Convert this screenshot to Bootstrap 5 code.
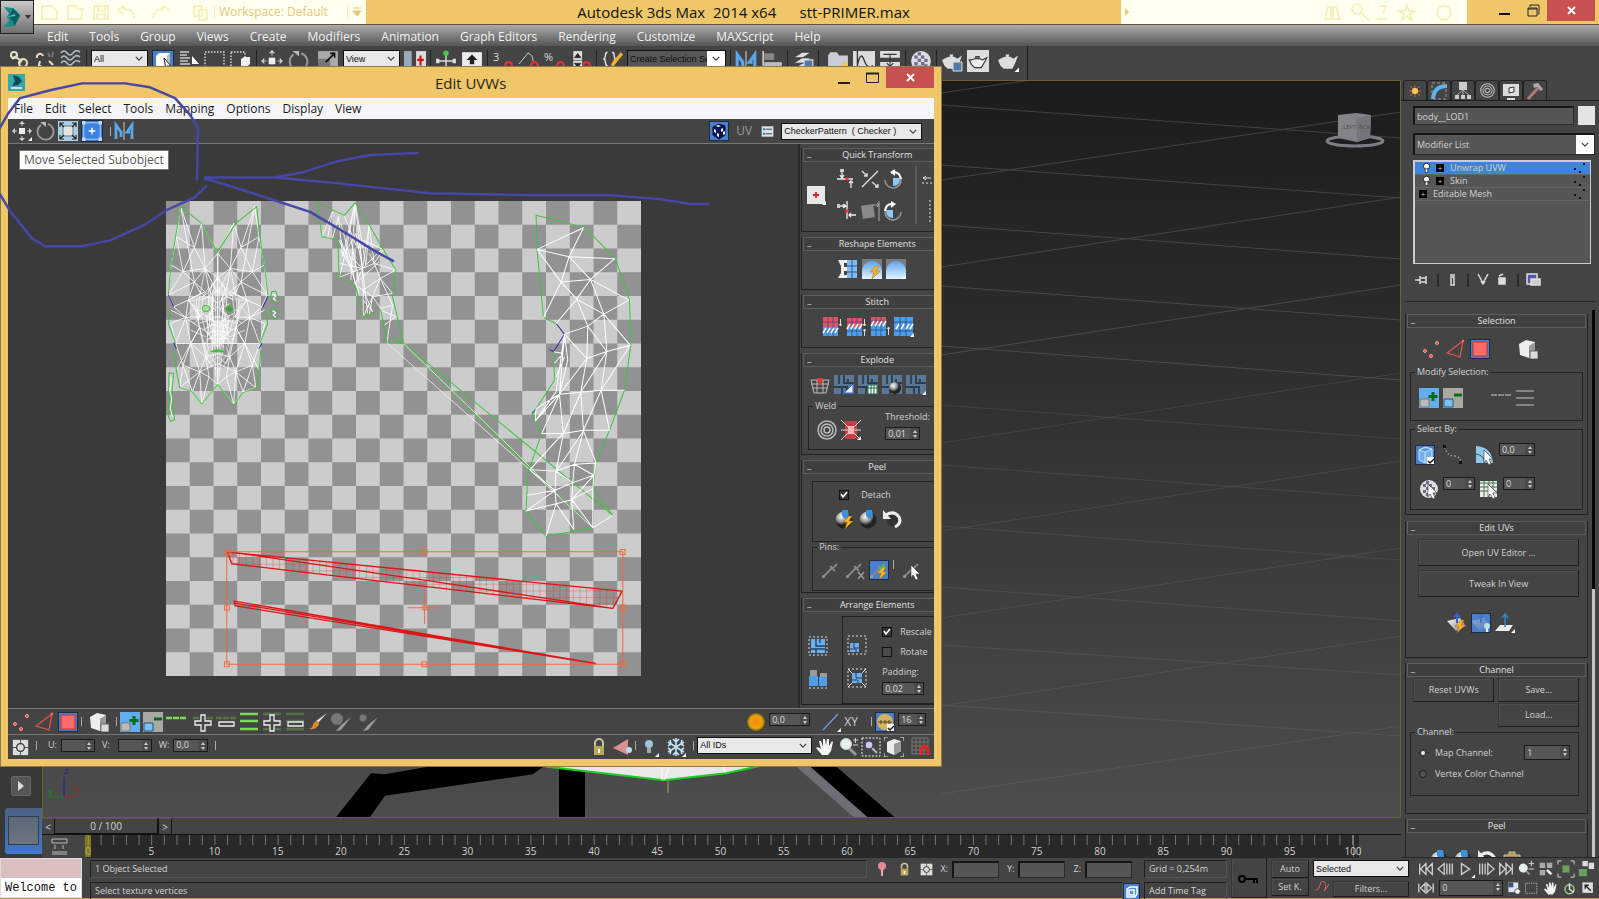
<!DOCTYPE html>
<html lang="en">
<head>
<meta charset="utf-8">
<meta name="viewport" content="width=device-width, initial-scale=1">
<title>Autodesk 3ds Max 2014 x64 - stt-PRIMER.max</title>
<link rel="stylesheet" href="https://cdn.jsdelivr.net/npm/bootstrap@5.3.0/dist/css/bootstrap.min.css">
<style>
:root{--gold:#efc768;--bg:#444;--line:#222;--field:#565656;--txt:#d2d2d2;--blue:#4a7fcb}
body{font:9px/12px "Open Sans",sans-serif;color:var(--txt);background:var(--bg);overflow:hidden}
button,input,select{font:inherit;color:inherit;border-radius:0}
button{background:none;border:0;padding:0;display:inline-flex;align-items:center;justify-content:center}
a{color:inherit;text-decoration:none}
svg{display:block;flex:none}
.ic{width:20px;height:20px}
.app{height:100vh}
.titlebar{height:25px;background:var(--gold);color:#111;border-bottom:1px solid #5d5340}
.appbtn{width:34px;height:34px;background:linear-gradient(#c9c9c9,#6f6f6f);border:1px solid #222;z-index:2;align-self:flex-start;flex:none}
.quick{background:#fffff0;height:24px;width:332px;color:#e6c877;font-size:12px}
.quick .wsp{border-left:1px solid #f6f0c0;border-right:1px solid #f6f0c0;width:134px}
.apptitle{font-size:15px;white-space:pre}
.search{background:#fffff0;height:24px;width:346px}
.winbtn{width:28px;height:21px}
.close{width:48px;height:21px;background:#c75050;color:#fff;align-self:flex-start}
.mainmenu{height:21px;background:linear-gradient(#aaa,#555);font-size:12px;color:#f2f2f2;padding:2px 0 0 36px}
.mainmenu a{padding:0 10px 0 11px}
.maintools{height:34px;padding:4px 0 0 8px;width:1028px;border-right:1px solid #1a1a1a;white-space:nowrap}
.maintools .ic{width:22px;height:22px}
.bar{width:1px;height:16px;background:#222;flex:none}
.lbar{width:1px;height:9px;background:#aaa;flex:none}
.drop{appearance:none;background:#e8e8e8 url("data:image/svg+xml,%3Csvg xmlns='http://www.w3.org/2000/svg' viewBox='0 0 10 6'%3E%3Cpath d='M1 1l4 4 4-4' fill='none' stroke='%23444' stroke-width='1.6'/%3E%3C/svg%3E") no-repeat right 4px center/8px 5px;color:#111;border:1px solid #111;font:9px/12px "Liberation Sans",sans-serif;height:17px;padding:0 14px 0 2px}
.boxed{background:url("data:image/svg+xml,%3Csvg xmlns='http://www.w3.org/2000/svg' viewBox='0 0 10 6'%3E%3Cpath d='M1 1l4 4 4-4' fill='none' stroke='%23444' stroke-width='1.6'/%3E%3C/svg%3E") no-repeat right 5px center/8px 5px,linear-gradient(#fff,#fff) no-repeat right/18px 100%,#565656;padding-right:18px}
.w57{width:57px}
.w99{width:99px}
.modlist{height:22px;color:var(--txt);font-family:inherit;margin-bottom:5px}
.on{background:var(--blue);outline:1px solid #1d2c44;outline-offset:-1px}
.strip{width:42px;background:#383838}
.playb{width:20px;height:20px;background:#555;border:1px solid #666;border-radius:2px}
.layoutb{width:37px;height:46px;border-radius:3px 0 0 3px;background:linear-gradient(#4c6180,#3f78cc);padding:8px 3px}
.layoutb i{width:31px;height:29px;background:linear-gradient(#5b6878,#6d747d);border:1px solid #333c4c}
.view{background:linear-gradient(#1b1b1b,#4d4d4d);border:1px solid #6e5f2c}
.slider{height:16px;font-size:10px}
.slider button{width:13px;border-right:1px solid #111;border-top:1px solid #555}
.slider .thumb{width:104px;border-right:2px solid #111;border-bottom:1px solid #111}
.ruler{height:24px;border-top:1px solid #111}
.rulerdark{background:#292929;padding-left:3px;padding-right:5px;margin-right:42px}
.ticks{height:22px;background:linear-gradient(90deg,#777 1px,transparent 1px) 0 0/1% 10px repeat-x;border-right:1px solid #777;padding-top:10px;font-size:10px;line-height:12px}
.ticks span{width:0;display:flex;justify-content:center;position:relative}
.ticks span:first-child::before{content:"";position:absolute;left:-3px;top:-10px;width:6px;height:22px;background:#a39b20;opacity:.7}
.cmd{width:198px}
.tabs{height:21px;border-bottom:1px solid #1b1b1b;padding-left:2px}
.tabs button{width:24px;border:1px solid #222;border-bottom:0;border-radius:3px 3px 0 0}
.cmdtop{padding-top:5px}
.field{border:1px solid #2b2b2b;border-top:2px solid #151515;border-left:2px solid #151515;min-width:0}
input.field{background:var(--field);color:var(--txt);padding:0 0 0 2px}
.coord{width:47px;height:17px}
.stack{height:104px;background:#565656;border:1px solid #ccc;border-width:2px 1px 1px 2px}
.stack li{height:13px;border-bottom:1px solid #666;gap:6px}
.stack li.sel{background:#3f83dc}
.plus{width:8px;height:8px;background:#000;color:#ccc;font-size:8px;line-height:7px;text-align:center}
.roll{border:1px solid var(--line);border-top:0}
.roll>h2{font-size:9px;line-height:12px;height:14px;font-weight:400;text-align:center;border:1px solid #5e5e5e;background:#404040;margin:0 1px;color:#e0e0e0;position:relative}
.roll>h2::before{content:"_";position:absolute;left:3px;line-height:8px}
fieldset{border:1px solid var(--line);min-width:0}
legend{float:none;width:auto;font-size:9px;line-height:10px;margin:0 0 0 4px;padding:0 2px}
.selrow{padding-top:9px}
.selrow2{padding-top:12px}
.selrow>:not(.spin),.selrow2>:not(.spin){margin-top:2px}
.mbtn{border:1px solid #383838;border-right-color:#1c1c1c;border-bottom-color:#1c1c1c;box-shadow:inset 1px 1px #4d4d4d}
.spin{height:13px;border:1px solid #1b1b1b;background:#4b4b4b;display:inline-flex;flex:none}
.spin input{background:var(--field);border:0;padding:0 0 0 2px;min-width:0;flex:1 1 0;line-height:10px;color:#ddd}
.spin i{width:9px;flex:none}
.spin i::before,.spin i::after{content:"";display:block;margin:2px auto 0;width:0;border:2px solid transparent}
.spin i::before{border-bottom:3px solid #ccc;border-top:0}
.spin i::after{border-top:3px solid #ccc;border-bottom:0}
.rail{width:4px;background:linear-gradient(#050505 51%,#c4c4c4 51%)}
.tick{appearance:none;width:10px;height:10px;border:1px solid #111;background:#4c4c4c;margin:0;flex:none}
.tick:checked{background:#333 url("data:image/svg+xml,%3Csvg xmlns='http://www.w3.org/2000/svg' viewBox='0 0 8 8'%3E%3Cpath d='M1 3l2 3 4-5' fill='none' stroke='%23fff' stroke-width='1.6'/%3E%3C/svg%3E") center/8px}
.dot{appearance:none;width:8px;height:8px;border:1px solid #1a1a1a;border-radius:50%;background:#555;margin:0}
.dot:checked{background:#eee;box-shadow:inset 0 0 0 1px #333}
.status{height:41px;border-bottom:1px solid #b99a4a}
.status>*{padding-top:2px}
.sline{border:1px solid #1f1f1f;border-right-color:#555;border-bottom-color:#555;height:18px;padding:2px 4px}
.listener{width:82px;border:1px solid #ddd}
.listener input{border:0;height:19px;font:12px/14px "Liberation Mono",monospace;color:#111;padding:0 0 0 4px}
.listener .rec{background:#d9bfc0}
.pb{width:178px}
.pb .ic{width:18px;height:18px}
/* floating UV editor */
.uvwin{position:absolute;left:1px;top:67px;width:58.8%;height:calc(100vh - 200px);background:var(--gold);padding:0 7px 7px;box-shadow:0 0 0 1px #8f7b48}
.uvtitle{height:31px;color:#2b2418;font-size:15px}
.uvtitle span{padding-left:86px}
.uvmenu{height:21px;background:#f5f5f7;color:#1a1a1a;font-size:12px;gap:12px;padding-left:6px}
.uvtool{height:25px;background:var(--bg);border-bottom:1px solid #777;gap:3px}
.uvarea{background:#3a3a3a;padding:25px 0 0 1px}
.checker{width:calc(60% + 2px);aspect-ratio:1;flex:none;background:conic-gradient(#ccc 25%,#929292 0 50%,#ccc 0 75%,#929292 0) 0 0/10% 10%}
.side{width:136px;background:var(--bg);border-left:2px solid #2b2b2b;overflow:hidden;padding:4px 0 0 1px}
.side>*{width:152px;margin-bottom:5px}
.foot{background:var(--bg);border-top:1px solid #777;height:26px;gap:3px}
.foot:last-child{height:25px}
.tip{position:absolute;left:19px;top:150px;height:20px;background:#fff;border:1px solid #767676;color:#575757;font-size:12px;line-height:18px;padding:0 4px}
.ink{position:absolute;left:0;top:0;pointer-events:none}
</style>
</head>
<body>
<svg width="0" height="0" class="position-absolute" aria-hidden="true">
<defs>
<linearGradient id="gs" x1="0" y1="0" x2="1" y2="1"><stop offset="0" stop-color="#fff"/><stop offset="1" stop-color="#777"/></linearGradient>
<linearGradient id="gb" x1="0" y1="0" x2="0" y2="1"><stop offset="0" stop-color="#5aa5ea"/><stop offset="1" stop-color="#e6f4ff"/></linearGradient>
<radialGradient id="gball" cx=".35" cy=".3"><stop offset="0" stop-color="#fff"/><stop offset=".6" stop-color="#999"/><stop offset="1" stop-color="#222"/></radialGradient>
<radialGradient id="gsun"><stop offset="0" stop-color="#f08a00"/><stop offset=".7" stop-color="#f3a010"/><stop offset="1" stop-color="#6d6a10"/></radialGradient>
<pattern id="redgrid" width="20" height="20" patternUnits="userSpaceOnUse"><path d="M0 0H20M0 0V20" stroke="#e22" stroke-width="3" fill="none"/></pattern>
<symbol id="cnr" viewBox="0 0 20 20"><path d="M20 16v4h-4z" fill="#fff"/></symbol>
<symbol id="link" viewBox="0 0 22 22"><g fill="none" stroke="#e8dfc2" stroke-width="2"><circle cx="6" cy="5" r="3"/><circle cx="15" cy="13" r="4"/><path d="M8 7l5 4M4 9l4-3M11 14l3-4"/></g></symbol>
<symbol id="unlink" viewBox="0 0 22 22"><g fill="none" stroke="#e8dfc2" stroke-width="2"><path d="M3 8a3 3 0 1 1 6-2M6 11l-1 4 4 3M15 11l4 4M14 17l4 2"/><path d="M14 3l2 4M19 2l-1 5" stroke="#777"/></g></symbol>
<symbol id="waves" viewBox="0 0 22 22"><path d="M1 3q3-4 6 0t6 0 7-1M1 8q3-4 6 0t6 0 7-1M1 13q3-4 6 0t6 0 7-1" fill="none" stroke="#aebcbf" stroke-width="1.6"/></symbol>
<symbol id="selobj" viewBox="0 0 22 22"><path d="M4 6l3-3h11v10l-3 3H4z" fill="#fff"/><path d="M15 6l3-3v10l-3 3z" fill="#bbb"/><path d="M12 8l7 8h-4l-1 4z" fill="#fff" stroke="#222"/></symbol>
<symbol id="sellist" viewBox="0 0 22 22"><path d="M2 2h9M2 5h7M2 8h10M2 11h8M2 14h10" stroke="#ccc" stroke-width="1.5"/><path d="M14 6l7 8h-7z" fill="#fff"/></symbol>
<symbol id="rectsel" viewBox="0 0 22 22"><path d="M1 2h19v17H1z" fill="none" stroke="#ddd" stroke-dasharray="1.5 1.5" stroke-width="1.4"/></symbol>
<symbol id="winsel" viewBox="0 0 22 22"><path d="M1 2h14v17H1z" fill="none" stroke="#ddd" stroke-dasharray="1.5 1.5" stroke-width="1.4"/><path d="M11 9l3-2h6v7l-2 2h-7z" fill="#eee"/></symbol>
<symbol id="move" viewBox="0 0 20 20"><path d="M10 0l3 3H7zM10 20l3-3H7zM0 10l3-3v6zM20 10l-3-3v6z" fill="#ccc"/><path d="M10 3v14M3 10h14" stroke="#ccc" stroke-dasharray="2 2"/><path d="M7 7h6v6H7z" fill="#eee"/></symbol>
<symbol id="rot" viewBox="0 0 20 20"><path d="M6 4a8 8 0 1 0 7-1" fill="none" stroke="#9a9a9a" stroke-width="1.8"/><path d="M5 1h6v5z" fill="#bbb"/></symbol>
<symbol id="scale" viewBox="0 0 20 20"><path d="M1 1h18v18H1z" fill="#aaa"/><path d="M1 8h11v11H1z" fill="#777"/><path d="M8 11l8-8M12 3h4v4" stroke="#111" fill="none" stroke-width="1.5"/></symbol>
<symbol id="uvscale" viewBox="0 0 20 20"><path d="M0 0h20v20H0z" fill="#a8cfe6"/><path d="M5 5h10v10H5z" fill="#e4e4e4" stroke="#777"/><path d="M2 6V2h4M14 2h4v4M18 14v4h-4M6 18H2v-4M2 2l4 4M18 2l-4 4M18 18l-4-4M2 18l4-4" stroke="#222" fill="none" stroke-width="1.2"/></symbol>
<symbol id="uvfree" viewBox="0 0 20 20"><path d="M2.500 2.500h15v15h-15z" fill="#3c83e0" stroke="#9cc6f5"/><path d="M10 7v6M7 10h6" stroke="#fff" stroke-width="1.300"/><path d="M1 1h3v3H1zM16 1h3v3h-3zM1 16h3v3H1zM16 16h3v3h-3z" fill="#bfe0ff"/></symbol>
<symbol id="mirror" viewBox="0 0 20 20"><path d="M2 18V4l5 7v5M18 18V4l-5 7h3" fill="none" stroke="#5aa8e8" stroke-width="2.800"/><path d="M10 1v18" stroke="#ccc"/></symbol>
<symbol id="pivot" viewBox="0 0 20 20"><path d="M0 1h7v18H0z" fill="#9ab"/><path d="M11 1h9v18h-9z" fill="#ddd"/><path d="M15 5v9M12 9h6" stroke="#c11" stroke-width="2"/></symbol>
<symbol id="manip" viewBox="0 0 20 20"><path d="M10 3v14M3 10h14" stroke="#ddd" stroke-width="1.300"/><circle cx="10" cy="3" r="2.500" fill="#4c4"/><path d="M1 8h3v4H1zM16 8h3v4h-3zM8 15h4v4H8z" fill="#ddd"/></symbol>
<symbol id="keyov" viewBox="0 0 20 20"><path d="M1 2h18v16H1z" fill="#eee"/><path d="M10 4l5 5h-3v4H8V9H5z" fill="#222"/></symbol>
<symbol id="magn" viewBox="0 0 20 20"><path d="M12 19v-5a3 3 0 0 1 6 0v5" fill="none" stroke="#d33" stroke-width="2.200"/></symbol>
<symbol id="updn" viewBox="0 0 20 20"><path d="M3 1h8v18H3z" fill="#ddd"/><path d="M7 3l3 4H4zM7 16l3-4H4zM3 9.500h8" fill="#222" stroke="#222" stroke-width=".5"/></symbol>
<symbol id="align" viewBox="0 0 20 20"><path d="M2 1v18" stroke="#ccc" stroke-width="1.500"/><path d="M3 3h9v6H3z" fill="#888"/><path d="M3 11h16v6H3z" fill="#bbb"/></symbol>
<symbol id="layers" viewBox="0 0 20 20"><path d="M1 7l8-5h9l-8 5zM1 12l8-5h9l-8 5zM1 17l8-5h9l-8 5z" fill="#ddd" stroke="#444"/><path d="M11 9h8v9h-8z" fill="#5379aa" stroke="#ddd"/></symbol>
<symbol id="ribbon" viewBox="0 0 20 20"><path d="M1 5l2-3h6l2 3h8v10H1z" fill="#c9ced6"/><circle cx="16" cy="14" r="3" fill="#f2c555"/></symbol>
<symbol id="curve" viewBox="0 0 20 20"><path d="M0 1h20v18H0z" fill="#ddd"/><path d="M4 1v18M4 14q3-14 6-5t8 5" stroke="#333" fill="none" stroke-width="1.200"/></symbol>
<symbol id="schem" viewBox="0 0 20 20"><path d="M1 1h18v6H1zM1 11h18v8H1z" fill="#ddd"/><path d="M10 4v11M7 12l3 3 3-3M4 4h12" stroke="#333" fill="none"/></symbol>
<symbol id="ball" viewBox="0 0 20 20"><circle cx="10" cy="10" r="9" fill="#dcdce4"/><path d="M4 5h3v3H4zM10 5h3v3h-3zM7 8h3v3H7zM4 11h3v3H4zM13 8h3v3h-3zM10 11h3v3h-3zM7 2h3v3H7zM13 13h3v3h-3zM7 14h3v3H7z" fill="#6d7088"/></symbol>
<symbol id="tea" viewBox="0 0 20 20"><path d="M3 8q7-4 12 0l4-3-2 6-3 6H6l-3-3-2-5 2-1 1 4zM8 4h3v2H8z" fill="#ddd"/></symbol>
<symbol id="teaf" viewBox="0 0 20 20"><path d="M0 0h20v20H0z" fill="#ddd"/><path d="M4 9q6-3 10 0l4-2-2 4-3 5H7l-3-3-2-4 2 0zM8 6h3v2H8z" fill="#eee" stroke="#333"/></symbol>
<symbol id="braces" viewBox="0 0 20 20"><path d="M6 2q-2 0-2 3t-2 3q2 0 2 3t2 4M10 2q2 0 2 3t2 3q-2 0-2 3t-2 4" fill="none" stroke="#ddd" stroke-width="1.300"/><path d="M10 14l9-11" stroke="#f0b030" stroke-width="3"/></symbol>
<symbol id="verts" viewBox="0 0 20 20"><g fill="#f33" stroke="#fbb" stroke-width=".8"><circle cx="15" cy="4" r="1.500"/><circle cx="3" cy="12" r="1.500"/><circle cx="9" cy="17" r="1.500"/></g></symbol>
<symbol id="tri" viewBox="0 0 20 20"><path d="M17 2L1 14l13 4z" fill="none" stroke="#e55252" stroke-width="1.300"/><circle cx="17" cy="2" r="1.300" fill="#f66"/></symbol>
<symbol id="poly" viewBox="0 0 20 20"><path d="M3 3h14v14H3z" fill="#ff6b6b" stroke="#c33"/></symbol>
<symbol id="cube" viewBox="0 0 20 20"><path d="M1 5l7-4 9 2v11l-6 5-9-3z" fill="#eee"/><path d="M11 7l6-4v11l-6 5z" fill="#999"/><path d="M12 12h8v8h-8z" fill="#ddd" stroke="#666"/></symbol>
<symbol id="grow" viewBox="0 0 20 20"><path d="M0 0h20v20H0z" fill="#62aef0"/><path d="M1 11h9v8H1z" fill="#bbb" stroke="#777"/><path d="M14 4v9M9.500 8.500h9" stroke="#0a6a18" stroke-width="3"/></symbol>
<symbol id="shrink" viewBox="0 0 20 20"><path d="M0 0h20v20H0z" fill="#a9a9a4"/><path d="M1 11h9v8H1z" fill="#7cc0f5" stroke="#257"/><path d="M11 7h8" stroke="#0a6a18" stroke-width="3"/></symbol>
<symbol id="loop1" viewBox="0 0 20 20"><path d="M0 6h6M7 6h6M14 6h6" stroke="#7bdc4a" stroke-width="2.500"/></symbol>
<symbol id="loop3" viewBox="0 0 20 20"><path d="M1 2h18M1 9h18M1 17h18" stroke="#7bdc4a" stroke-width="2.500"/></symbol>
<symbol id="gloop1" viewBox="0 0 20 20"><path d="M0 7h6M7 7h6M14 7h6" stroke="#888" stroke-width="2"/></symbol>
<symbol id="gloop3" viewBox="0 0 20 20"><path d="M1 3h18M1 10h18M1 17h18" stroke="#999" stroke-width="1.600"/></symbol>
<symbol id="plusw" viewBox="0 0 20 20"><path d="M8 3h4v6h6v4h-6v6H8v-6H2V9h6z" fill="#444" stroke="#eee" stroke-width="1.300"/></symbol>
<symbol id="minw" viewBox="0 0 20 20"><path d="M3 10h15v4H3z" fill="#444" stroke="#eee" stroke-width="1.300"/></symbol>
<symbol id="brush" viewBox="0 0 20 20"><path d="M19 1l-9 10-2-2z" fill="#ddd"/><path d="M9 9q4 2 0 6-3 3-8 2 4-1 4-5 2-3 4-3z" fill="#d98a2b"/></symbol>
<symbol id="gbrush" viewBox="0 0 20 20"><circle cx="6" cy="7" r="6" fill="#777"/><path d="M20 5l-6 8-4 5-5 1 5-6z" fill="#999"/></symbol>
<symbol id="gbrush2" viewBox="0 0 20 20"><circle cx="5" cy="6" r="3.500" fill="#777"/><path d="M20 5l-6 8-4 5-5 1 5-6z" fill="#999"/></symbol>
<symbol id="gizmo" viewBox="0 0 20 20"><path d="M1 1h18v18H1z" fill="#ddd"/><path d="M10 0v20M0 10h20" stroke="#444"/><circle cx="10" cy="10" r="4.500" fill="#ddd" stroke="#333" stroke-width="1.500"/></symbol>
<symbol id="lock" viewBox="0 0 20 20"><path d="M6 9V6a4 4 0 0 1 8 0v3" fill="none" stroke="#ccc49a" stroke-width="2"/><path d="M5 9h10v9H5z" fill="#b9a85a"/><path d="M9 12h2v4H9z" fill="#fff"/></symbol>
<symbol id="hide" viewBox="0 0 20 20"><path d="M1 11L16 2v16z" fill="#d99090"/><circle cx="17" cy="13" r="3" fill="#bde"/></symbol>
<symbol id="bulb" viewBox="0 0 20 20"><circle cx="10" cy="7" r="4" fill="#9fc4dc"/><path d="M8 11h4v5H8z" fill="#aaa"/></symbol>
<symbol id="snow" viewBox="0 0 20 20"><path d="M10 1v18M2 5l16 10M18 5L2 15M7 2l3 3 3-3M7 18l3-3 3 3M2 9l3-2-1-4M18 9l-3-2 1-4M2 11l3 2-1 4M18 11l-3 2 1 4" stroke="#bfe4f8" stroke-width="1.600" fill="none"/></symbol>
<symbol id="hand" viewBox="0 0 20 20"><path d="M7 18l-6-7 2-1 3 2-2-8 2 0 2 6V2h2l1 6 1-6 2 0v7l3-5 1 1-2 9-3 4z" fill="#f4f4f4"/></symbol>
<symbol id="lens" viewBox="0 0 20 20"><path d="M11 11l7 7" stroke="#999" stroke-width="3"/><circle cx="8" cy="7" r="5.500" fill="#e6f0ea" stroke="#ccc"/></symbol>
<symbol id="lensr" viewBox="0 0 20 20"><path d="M1 1h18v18H1z" fill="none" stroke="#eee" stroke-dasharray="2 1.500"/><path d="M11 11l5 5" stroke="#bbb" stroke-width="2"/><circle cx="8" cy="8" r="4" fill="#ccd" stroke="#447" stroke-width="1.500"/></symbol>
<symbol id="box" viewBox="0 0 20 20"><path d="M3 5l7-3 7 2v10l-7 4-7-3z" fill="#eee"/><path d="M10 7l7-3v10l-7 4z" fill="#999"/><path d="M0 4V0h4M16 0h4v4M0 16v4h4M20 16v4h-4" fill="none" stroke="#eee"/></symbol>
<symbol id="snapg" viewBox="0 0 20 20"><path d="M1 1h16v16H1zM5 1v16M9 1v16M13 1v16M1 5h16M1 9h16M1 13h16" fill="none" stroke="#777"/><path d="M10 18v-5a3.500 3.500 0 0 1 7 0v5" fill="none" stroke="#e22" stroke-width="2.800"/></symbol>
<symbol id="chkcube" viewBox="0 0 20 20"><path d="M4 6l6-3 6 2v9l-6 4-6-4z" fill="#08125e" stroke="#112"/><path d="M5 8l2 1v3l-2-1zM8 12l2 1v3l-2-1zM12 8l2-1v3l-2 1zM9 4l3 1-3 1-2-1zM14 11l2-1v3l-2 1z" fill="#fff"/></symbol>
<symbol id="props" viewBox="0 0 20 20"><path d="M1 2h18v16H1z" fill="#dbe5ee"/><path d="M3 5h3v3H3zM3 12h3v3H3z" fill="#27b"/><path d="M7 6.500h10M7 13.500h10" stroke="#345" stroke-width="1.500"/></symbol>
<symbol id="redplus" viewBox="0 0 20 20"><path d="M1 1h18v18H1z" fill="#e8e8e8"/><path d="M10 7v6M7 10h6" stroke="#d22" stroke-width="1.800"/></symbol>
<symbol id="alh" viewBox="0 0 20 20"><path d="M0 10h16M5 1v7M3 6l2 3 2-3M14 19v-7M12 14l2-2 2 2" stroke="#eee" fill="none" stroke-width="1.300"/><path d="M3 0h4v3H3z" fill="#ccc"/><circle cx="10" cy="10" r="1.800" fill="#e33"/></symbol>
<symbol id="alv" viewBox="0 0 20 20"><path d="M10 0v18M1 5h7M6 3l3 2-3 2M19 14h-7M14 12l-2 2 2 2" stroke="#eee" fill="none" stroke-width="1.300"/><path d="M0 3h3v4H0z" fill="#ccc"/><circle cx="10" cy="10" r="1.800" fill="#e33"/></symbol>
<symbol id="diag" viewBox="0 0 20 20"><path d="M18 2L2 18M2 2l5 5M7 4v3H4M12 13l6 5M18 15v3h-3" stroke="#ddd" fill="none" stroke-width="1.400"/></symbol>
<symbol id="rcw" viewBox="0 0 20 20"><path d="M2 11a8 8 0 1 0 7-8" fill="none" stroke="#999" stroke-width="1.500"/><path d="M8 4q8-3 10 6" fill="none" stroke="#fff" stroke-width="2"/><path d="M12 0v7L7 3z" fill="#fff"/><path d="M10 9h7q0 8-7 8z" fill="#8ccaf5"/></symbol>
<symbol id="rccw" viewBox="0 0 20 20"><path d="M18 11a8 8 0 1 1-7-8" fill="none" stroke="#999" stroke-width="1.500"/><path d="M2 10q1-8 8-7" fill="none" stroke="#fff" stroke-width="2"/><path d="M8 0v7l5-4z" fill="#fff"/><path d="M10 9H3q0 8 7 8z" fill="#8ccaf5"/></symbol>
<symbol id="distort" viewBox="0 0 20 20"><path d="M1 5l12-2 2 13-12 2z" fill="#8a8a8a"/><path d="M13 4h6M17 2l2 2-2 2M19 0v20" stroke="#aaa" fill="none"/></symbol>
<symbol id="straight" viewBox="0 0 20 20"><path d="M9 1h10v18H9z" fill="#7dbcf5"/><path d="M0 1h9v3H6v4h3v4H6v4h3v3H0l3-5V7z" fill="#eee"/><path d="M9 7h10M9 13h10M14 1v18" stroke="#2a5d95"/></symbol>
<symbol id="relax" viewBox="0 0 20 20"><path d="M0 0h20v20H0z" fill="#7a7d80"/><path d="M0 20V12a10 10 0 0 1 20 0v8z" fill="url(#gb)"/></symbol>
<symbol id="bolt" viewBox="0 0 20 20"><path d="M14 7l-6 6h4l-2 7 8-8h-4l3-5z" fill="#f6b52c" stroke="#a60" stroke-width=".5"/></symbol>
<symbol id="st" viewBox="0 0 20 20"><path d="M1 0h15v10H1z" fill="#e0536a"/><path d="M1 10h15v9H1z" fill="#4f9de8"/><path d="M6 0v19M11 0v19M1 5h15M1 14h15" stroke="#1d4470" stroke-width=".6"/><path d="M1 16l3-5M5 16l3-5M9 16l3-5M13 16l3-5" stroke="#fff" stroke-width="1.500"/><path d="M18.500 2v7M17 7l1.500 2L20 7" stroke="#ddd" fill="none"/></symbol>
<symbol id="st2" viewBox="0 0 20 20"><path d="M1 1h15v9H1z" fill="#e0536a"/><path d="M1 10h15v9H1z" fill="#4f9de8"/><path d="M6 0v19M11 0v19M1 5h15M1 14h15" stroke="#1d4470" stroke-width=".6"/><path d="M1 12l3-5M5 12l3-5M9 12l3-5M13 12l3-5" stroke="#fff" stroke-width="1.500"/><path d="M18.500 2v7M17 7l1.500 2L20 7M18.500 19v-7M17 14l1.500-2 1.500 2" stroke="#ddd" fill="none"/></symbol>
<symbol id="st3" viewBox="0 0 20 20"><path d="M1 0h15v7H1z" fill="#e0536a"/><path d="M1 7h15v12H1z" fill="#4f9de8"/><path d="M6 0v19M11 0v19M1 4h15M1 13h15" stroke="#1d4470" stroke-width=".6"/><path d="M1 9l3-5M5 9l3-5M9 9l3-5M13 9l3-5" stroke="#fff" stroke-width="1.500"/><path d="M18.500 18v-8M17 12l1.500-2 1.500 2" stroke="#ddd" fill="none"/></symbol>
<symbol id="stb" viewBox="0 0 20 20"><path d="M0 0h19v19H0z" fill="#4f9de8"/><path d="M6 0v19M12 0v19M0 5h19M0 14h19" stroke="#1d4470" stroke-width=".7"/><path d="M2 12l3-5M7 12l3-5M12 12l3-5M16 12l3-5" stroke="#fff" stroke-width="1.500"/></symbol>
<symbol id="flat" viewBox="0 0 20 20"><path d="M0 0h20v19H0z" fill="#5a7896"/><path d="M5 0v9M0 12h7M10 0v8h10M14 4v4M8 19v-7h6M13 13v6" stroke="#2e3b48" stroke-width="1.800" fill="none"/></symbol>
<symbol id="break" viewBox="0 0 20 20"><path d="M1 5h18l-3 13H4zM1 9h18M2 13h16M7 5v13M13 5v13" fill="none" stroke="#bbb"/><path d="M7 3h6l-3 9z" fill="#e33"/></symbol>
<symbol id="target" viewBox="0 0 20 20"><g fill="none" stroke="#bbb" stroke-width="1.500"><circle cx="10" cy="10" r="9"/><circle cx="10" cy="10" r="6"/><circle cx="10" cy="10" r="3"/></g></symbol>
<symbol id="weld" viewBox="0 0 20 20"><path d="M4 1h12v18H4z" fill="#c93c44"/><path d="M7 6h6v8H7z" fill="#f4b6b6"/><path d="M0 0l7 7M20 0l-7 7M0 20l7-7M20 20l-7-7M0 10h7M20 10h-7" stroke="#ddd" fill="none"/></symbol>
<symbol id="peel" viewBox="0 0 20 20"><circle cx="9" cy="11" r="8.500" fill="url(#gball)"/><path d="M7 1h6l1 7-4 2-3-3z" fill="#3f8fd8"/></symbol>
<symbol id="undo" viewBox="0 0 20 20"><circle cx="11" cy="11" r="7" fill="#333"/><path d="M3 6q8-5 13 2 3 6-4 10" fill="none" stroke="#eee" stroke-width="3"/><path d="M0 1v9h8z" fill="#eee"/></symbol>
<symbol id="pin" viewBox="0 0 20 20"><path d="M2 17l9-9M9 6l5 5M12 8l4-4" stroke="#888" stroke-width="1.800"/><circle cx="2.500" cy="16.500" r="1.600" fill="#999"/></symbol>
<symbol id="arrow" viewBox="0 0 20 20"><path d="M9 5l9 9h-4l2 5-2 1-3-5-2 3z" fill="#fff" stroke="#333" stroke-width=".6"/></symbol>
<symbol id="pack" viewBox="0 0 20 20"><path d="M1 1h18v18H1z" fill="none" stroke="#ddd" stroke-dasharray="2 2"/><path d="M3 3h14v14H3z" fill="#6fb0ea"/><path d="M8 3v7h9M12 3v4M3 13h14M8 13v4" stroke="#1d4168" fill="none" stroke-width="1.300"/></symbol>
<symbol id="packs" viewBox="0 0 20 20"><path d="M1 1h18v18H1z" fill="none" stroke="#ddd" stroke-dasharray="2 2"/><path d="M3 8h9v9H3z" fill="#6fb0ea"/><path d="M7 8v5h5M3 14h6v3" stroke="#1d4168" fill="none"/></symbol>
<symbol id="packc" viewBox="0 0 20 20"><path d="M1 1h18v18H1z" fill="none" stroke="#ddd" stroke-dasharray="2 2"/><path d="M5 5h10v10H5z" fill="#6fb0ea"/><path d="M9 5v5h6M5 12h6v3" stroke="#1d4168" fill="none"/><path d="M1 1l4 4M19 1l-4 4M1 19l4-4M19 19l-4-4" stroke="#dde" fill="none"/></symbol>
<symbol id="lin" viewBox="0 0 20 20"><path d="M2 1h7v6H2zM12 4h7v4h-7z" fill="#999"/><path d="M1 7h9v10H1zM11 8h8v9h-8z" fill="#4f9de8"/><path d="M1 19h18" stroke="#ddd" stroke-dasharray="2 2"/></symbol>
<symbol id="dots" viewBox="0 0 20 20"><path d="M2 2q2 9 9 9t7 8" stroke="#aaa" fill="none" stroke-dasharray="1.500 2" stroke-width="1.300"/><path d="M0 0h3v3H0zM16 16h3v3h-3z" fill="#111"/></symbol>
<symbol id="ang" viewBox="0 0 20 20"><path d="M1 1q16 1 17 17H1z" fill="#8fc8ea"/><path d="M1 9q8 1 9 9" fill="none" stroke="#27567a"/></symbol>
<symbol id="sheet" viewBox="0 0 20 20"><path d="M1 2h17v16H1z" fill="#e8efe5"/><path d="M1 4h17M1 8h17M1 12h17M5 2v16M10 2v16M14 2v16" stroke="#49754c"/></symbol>
<symbol id="plane" viewBox="0 0 20 20"><path d="M0 8l13-3 6 8-10 5z" fill="url(#gs)"/><path d="M10 1v9M7 4l3-3 3 3" stroke="#36c" stroke-width="2" fill="none"/></symbol>
<symbol id="plane2" viewBox="0 0 20 20"><path d="M5 12h13l-4 6H0z" fill="#eee"/><path d="M10 2v12M7 5l3-4 3 4" stroke="#2a86c8" stroke-width="1.600" fill="none"/></symbol>
<symbol id="chk" viewBox="0 0 20 20"><path d="M12 12h8v8h-8z" fill="#fff"/><path d="M13 16l2 2 4-4" stroke="#111" fill="none" stroke-width="1.300"/></symbol>
<symbol id="logo" viewBox="0 0 20 24"><path d="M1 1l10 1 8 8-6 12-12 1 6-7-3-4 3-4z" fill="#148d8b"/><path d="M11 2l8 8-12 2zM13 22l6-12-12 2 4 5z" fill="#0a5f63"/><path d="M4 12l9-3 1 2z" fill="#5fd0c4"/></symbol>
<symbol id="bulbw" viewBox="0 0 8 12"><circle cx="4" cy="4" r="3.500" fill="#fff" stroke="#111"/><path d="M2.500 7h3v4h-3z" fill="#fff" stroke="#111" stroke-width=".7"/></symbol>
<symbol id="vd" viewBox="0 0 12 12"><path d="M0 6h2v2H0zM5 9h2v2H5zM9 1h2v2H9z" fill="#111"/></symbol>
<symbol id="kstart" viewBox="0 0 20 20"><path d="M3 4v12M10 4l-6 6 6 6zM17 4l-6 6 6 6z" fill="none" stroke="#ccc" stroke-width="1.500"/></symbol>
<symbol id="kprev" viewBox="0 0 20 20"><path d="M8 4l-7 6 7 6zM11 4v12M14 4v12M17 4v12" fill="none" stroke="#ccc" stroke-width="1.500"/></symbol>
<symbol id="kplay" viewBox="0 0 20 20"><path d="M5 4l9 6-9 6z" fill="none" stroke="#ccc" stroke-width="1.500"/><path d="M20 16v4h-4z" fill="#fff"/></symbol>
</defs></svg>

<div class="app d-flex flex-column position-relative">
<header class="titlebar d-flex align-items-center flex-shrink-0">
  <button class="appbtn" aria-label="Application menu"><svg width="18" height="24"><use href="#logo"/></svg><svg width="7" height="5" class="ms-1"><path d="M0 0h6L3 4z" fill="#333"/></svg></button>
  <div class="quick d-flex align-items-center">
    <svg width="180" height="22" fill="none" stroke="#f5eeb0" stroke-width="1.500"><path d="M8 5h9l6 5v8H8zM34 18V5h7l3 3h5l-2 10zM60 5h14v13H60zM64 5v5h7V5M63 18v-5h8v5M84 9l6-4v3q10 0 10 9M84 9l6 4M135 9l-6-4v3q-8 0-10 9M160 5h8v10h-8zM165 9h8v10h-8z"/></svg>
    <span class="wsp ps-1">Workspace: Default</span>
    <svg width="14" height="12" class="ms-1"><path d="M1 2h8M1 5h8L5 10z" fill="#e6c877" stroke="#e6c877"/></svg>
  </div>
  <div class="apptitle flex-grow-1 text-center">Autodesk 3ds Max  2014 x64      stt-PRIMER.max</div>
  <div class="search d-flex align-items-center justify-content-between ps-1">
    <svg width="6" height="10"><path d="M0 1l4 4-4 4z" fill="#e6c877"/></svg>
    <svg width="144" height="22" fill="none" stroke="#f5eeb0" stroke-width="1.500"><path d="M2 18l3-12h3v12zM10 18V6h3l4 12zM38 12l8 7"/><circle cx="34" cy="8" r="5"/><path d="M54 18h10M56 5h7l-3 8M84 4l2 6h6l-5 3 2 6-5-4-5 4 2-6-5-3h6z"/><circle cx="121" cy="12" r="7"/></svg>
  </div>
  <div class="d-flex align-items-center justify-content-end align-self-start ms-4">
    <button class="winbtn" aria-label="Minimize"><svg width="12" height="10"><path d="M0 8h11" stroke="#111" stroke-width="2"/></svg></button>
    <button class="winbtn" aria-label="Restore"><svg width="13" height="13" fill="none" stroke="#222"><path d="M1 4h9v8H1zM1 5h9M3 3V1h9v9h-1"/></svg></button>
    <button class="close" aria-label="Close"><svg width="9" height="9"><path d="M1 1l7 7M8 1L1 8" stroke="#fff" stroke-width="2"/></svg></button><span class="ps-1"></span>
  </div>
</header>
<nav class="mainmenu d-flex align-items-center flex-shrink-0">
<a href="#">Edit</a><a href="#">Tools</a><a href="#">Group</a><a href="#">Views</a><a href="#">Create</a><a href="#">Modifiers</a><a href="#">Animation</a><a href="#">Graph Editors</a><a href="#">Rendering</a><a href="#">Customize</a><a href="#">MAXScript</a><a href="#">Help</a>
</nav>
<div class="maintools d-flex flex-shrink-0 align-items-start gap-1">
  <svg class="ic"><use href="#link"/></svg><svg class="ic"><use href="#unlink"/></svg><svg class="ic"><use href="#waves"/></svg><span class="bar"></span>
  <select class="drop w57" aria-label="Selection filter"><option>All</option></select>
  <button class="on" aria-label="Select object"><svg class="ic"><use href="#selobj"/></svg></button><svg class="ic"><use href="#sellist"/></svg><svg class="ic"><use href="#rectsel"/></svg><svg class="ic"><use href="#winsel"/></svg><span class="bar"></span>
  <svg class="ic"><use href="#move"/></svg><svg class="ic"><use href="#rot"/></svg><svg class="ic ms-1"><use href="#scale"/></svg>
  <select class="drop w57" aria-label="Reference coordinate system"><option>View</option></select>
  <svg class="ic"><use href="#pivot"/></svg><span class="bar"></span><svg class="ic"><use href="#manip"/></svg><svg class="ic"><use href="#keyov"/></svg><span class="bar"></span>
  <svg class="ic"><text x="1" y="11" fill="#ddd" font-size="11">3</text><use href="#magn"/></svg><svg class="ic"><path d="M1 14L10 3q5 2 5 8" fill="none" stroke="#ccc"/><use href="#magn"/></svg><svg class="ic"><text x="0" y="11" fill="#ddd" font-size="11">%</text><use href="#magn"/></svg><svg class="ic"><use href="#updn"/><use href="#magn"/></svg><span class="bar"></span>
  <svg class="ic"><use href="#braces"/></svg>
  <select class="drop boxed w99" aria-label="Named selection sets"><option>Create Selection Se</option></select>
  <span class="bar"></span><svg class="ic"><use href="#mirror"/></svg><svg class="ic"><use href="#align"/></svg><span class="bar"></span><svg class="ic"><use href="#layers"/></svg><span class="bar"></span><svg class="ic ms-1"><use href="#ribbon"/></svg><svg class="ic"><use href="#curve"/></svg><svg class="ic"><use href="#schem"/></svg><span class="bar"></span><svg class="ic"><use href="#ball"/></svg><span class="bar"></span><svg class="ic"><use href="#tea"/><path d="M12 12h9v9h-9z" fill="#5379aa" stroke="#ddd"/></svg><svg class="ic"><use href="#teaf"/></svg><svg class="ic ms-1"><use href="#tea"/><use href="#cnr"/></svg>
</div>

<main class="d-flex flex-grow-1 overflow-hidden">
  <aside class="strip d-flex flex-column justify-content-end align-items-end flex-shrink-0 pb-1">
    <button class="playb align-self-center mb-2" aria-label="Play"><svg width="6" height="10"><path d="M0 0l6 5-6 5z" fill="#ddd"/></svg></button>
    <div class="layoutb mt-1"><i class="d-block"></i></div>
  </aside>
  <section class="d-flex flex-column flex-grow-1 overflow-hidden">
    <div class="view flex-grow-1 overflow-hidden">
      <svg width="100%" height="100%"><g transform="translate(-43 -81)">
        <g stroke="#777" stroke-width="1" opacity=".4" fill="none"><path d="M941 105l460 33M941 165l460 33M941 225l460 34M941 286l460 34M941 346l460 34"/><path d="M941 93l90-13M941 180l460-68M941 267l460-70M941 355l460-70"/></g>
        <g stroke="#888" stroke-width="1" opacity=".2" fill="none"><path d="M941 405l460 34M941 465l460 34M941 526l460 34M941 587l460 34M941 645l460 30M941 705l460 31M941 443l460-70M941 531l460-70M941 618l460-70M941 706l460-70M941 794l460-68"/></g>
        <g transform="translate(0 13) scale(1 .981)"><path d="M335 821l36-46 14 1 50-9h110l-12 9-148 22-16 23zM559 760h26v61h-26zM808 767h27l61 54h-28z"/>
        <path d="M795 767h14l60 54h-14z" fill="#6d6f76"/>
        <path d="M545 768l119 14 62-7 36-8z" fill="#e8e8e8"/><path d="M545 768l119 14 62-7 36-8" fill="none" stroke="#1ccc22" stroke-width="2"/><path d="M668 783v12" stroke="#bba94a"/><path d="M662 782v-14M664 782l6-14M725 774l-2-7" stroke="#fff"/></g>
        <path d="M64 797v-20" stroke="#1c1c9c"/><path d="M64 797h-14M50 797l3-4" stroke="#1c7a1c"/><path d="M64 797l10-2M75 788l4 5M79 788l-4 5" stroke="#a22"/><text x="48" y="795" font-size="9" fill="#1c8a1c">y</text><text x="64" y="774" font-size="9" fill="#1c1c9c">z</text>
        <g transform="translate(0 -2)"><ellipse cx="1355" cy="143" rx="28" ry="5" fill="none" stroke="#7c7e84" stroke-width="3"/>
        <path d="M1338 117l18-2 15 2-1 23-13 4-19-4z" fill="#82848a"/><path d="M1356 120l15-3-1 23-13 4z" fill="#73757b"/><text x="1343" y="131" font-size="6" fill="#4b4c52">LEFT</text><text x="1359" y="131" font-size="6" fill="#4b4c52">BCK</text></g>
      </g></svg>
    </div>
    <div class="slider d-flex flex-shrink-0"><button aria-label="Previous frame">&lt;</button><button class="thumb">0 / 100</button><button aria-label="Next frame">&gt;</button></div>
    <div class="ruler d-flex flex-shrink-0">
      <svg width="43" height="22" fill="none" stroke="#bbb"><path d="M10 4h15v4H10zM13 10v4M21 10v4M10 17h15M10 19h15"/></svg>
      <div class="rulerdark flex-grow-1"><div class="ticks d-flex justify-content-between"><span>0</span><span>5</span><span>10</span><span>15</span><span>20</span><span>25</span><span>30</span><span>35</span><span>40</span><span>45</span><span>50</span><span>55</span><span>60</span><span>65</span><span>70</span><span>75</span><span>80</span><span>85</span><span>90</span><span>95</span><span>100</span></div></div>
    </div>
  </section>
  <aside class="cmd flex-shrink-0 d-flex flex-column overflow-hidden border-bottom border-dark">
    <div class="tabs d-flex flex-shrink-0">
      <button aria-label="Create"><svg class="ic" viewBox="0 0 20 20"><path d="M10 4v12M4 10h12M5 5l10 10M15 5L5 15" stroke="#c76b1e"/><circle cx="10" cy="10" r="3" fill="#ffc860"/></svg></button>
      <button aria-label="Modify"><svg class="ic" viewBox="0 0 20 20"><path d="M4 18Q5 5 18 5" stroke="#5cb3ee" stroke-width="4" fill="none"/><path d="M3 2h14v16H3z" fill="none" stroke="#999" stroke-dasharray="3 2"/></svg></button>
      <button aria-label="Hierarchy"><svg class="ic" viewBox="0 0 20 20"><path d="M6 1h8v8H6zM2 14h4v4H2zM8 14h4v4H8zM14 14h4v4h-4z" fill="#ccc"/><path d="M10 9v5M10 9l-6 5M10 9l6 5" stroke="#aaa"/></svg></button>
      <button aria-label="Motion"><svg width="15" height="15"><use href="#target"/></svg></button>
      <button aria-label="Display"><svg class="ic" viewBox="0 0 20 20"><path d="M2 3h16v12H2zM6 17h8v2H6z" fill="#ddd"/><path d="M8 7l5-1v5l-5 1z" fill="#eee" stroke="#333"/></svg></button>
      <button aria-label="Utilities"><svg class="ic" viewBox="0 0 20 20"><path d="M3 18L13 7" stroke="#b07a70" stroke-width="3"/><path d="M8 3l5-1 5 6-2 2-4-4-3 1z" fill="#aaa"/></svg></button>
    </div>
    <div class="cmdtop px-1 ms-2 flex-shrink-0">
      <div class="d-flex gap-1 mb-1"><input class="field flex-grow-1" aria-label="Object name" value="body__LOD1" style="height:19px"><button aria-label="Object color" style="width:17px;background:#e4e4e4"></button></div>
      <select class="drop boxed field modlist w-100 mt-1" aria-label="Modifier List"><option>Modifier List</option></select>
      <ul class="stack list-unstyled mb-0 me-1">
        <li class="sel d-flex align-items-center ps-2"><svg width="7" height="12"><use href="#bulbw"/></svg><span class="plus">+</span><span class="flex-grow-1">Unwrap UVW</span><svg width="12" height="12" class="me-1"><use href="#vd"/></svg></li>
        <li class="d-flex align-items-center ps-2"><svg width="7" height="12"><use href="#bulbw"/></svg><span class="plus">+</span><span class="flex-grow-1">Skin</span><svg width="12" height="12" class="me-1"><use href="#vd"/></svg></li>
        <li class="d-flex align-items-center ps-1"><span class="plus">+</span><span class="flex-grow-1">Editable Mesh</span><svg width="12" height="12" class="me-1"><use href="#vd"/></svg></li>
      </ul>
      <svg width="180" height="37" fill="none" stroke="#ddd" stroke-width="1.500"><path d="M2 16h5M7 12v8M8 14h5v4H8M13 12v8M37 11h5M38 13h3v8h-3zM65 10l5 9 5-9M68 17l2 3 2-3"/><path d="M25 10v13M55 10v13M105 10v13" stroke="#222"/><path d="M86 14h6v6h-6zM86 12l4-2" fill="#ddd"/><path d="M114 10h10v10h-10z" stroke="#dde" fill="#55a"/><path d="M118 15h9v6h-9z" fill="#ccc"/></svg>
    </div>
    <div class="d-flex flex-grow-1 border-top border-dark pt-2 ms-1 me-1 overflow-hidden">
      <div class="flex-grow-1 overflow-hidden pt-1">
        <section class="roll" style="height:201px;margin-bottom:6px"><h2>Selection</h2>
          <div class="d-flex ps-3 gap-1" style="padding-top:11px"><svg class="ic"><use href="#verts"/></svg><svg class="ic"><use href="#tri"/></svg><button class="on" aria-label="Polygon"><svg class="ic"><use href="#poly"/></svg></button><svg class="ic ms-4"><use href="#cube"/></svg></div>
          <fieldset class="mx-1 mt-2" style="height:54px"><legend>Modify Selection:</legend><div class="selrow d-flex gap-1 ps-2"><svg class="ic"><use href="#grow"/></svg><svg class="ic"><use href="#shrink"/></svg><svg class="ic ms-4"><use href="#gloop1"/></svg><svg class="ic"><use href="#gloop3"/></svg></div></fieldset>
          <fieldset class="mx-1" style="height:86px;margin-top:3px"><legend>Select By:</legend>
            <div class="selrow d-flex align-items-start ps-1 gap-1"><button class="on" aria-label="Ignore backfacing"><svg class="ic"><path d="M4 5l6-3 7 2v11l-7 3-6-3zM10 7V18M4 5l6 2 7-3" fill="#6fb2ee" stroke="#cfe6fb"/><use href="#chk"/></svg></button><svg class="ic ms-1"><use href="#dots"/></svg><svg class="ic ms-2"><use href="#ang"/><use href="#arrow"/></svg><span class="spin" style="width:36px"><input aria-label="Angle" value="0,0"><i></i></span></div>
            <div class="selrow2 d-flex align-items-start ps-2 gap-1"><svg class="ic"><use href="#ball"/><use href="#arrow"/></svg><span class="spin" style="width:32px"><input aria-label="Material ID" value="0"><i></i></span><svg class="ic"><use href="#sheet"/><use href="#arrow"/></svg><span class="spin" style="width:32px"><input aria-label="Smoothing group" value="0"><i></i></span></div>
          </fieldset>
        </section>
        <section class="roll" style="height:137px;margin-bottom:5px"><h2>Edit UVs</h2>
          <div class="px-2 ms-1"><button class="mbtn w-100 mt-1" style="height:27px">Open UV Editor ...</button><button class="mbtn w-100 mt-1" style="height:27px">Tweak In View</button></div>
          <div class="d-flex justify-content-center gap-1 mt-3 pe-4"><svg class="ic"><use href="#plane"/><use href="#bolt"/></svg><button class="on" aria-label="Tweak"><svg class="ic"><use href="#plane" opacity=".3"/><circle cx="16" cy="13" r="3" fill="#bde"/><path d="M16 15v4" stroke="#def" stroke-width="2"/></svg></button><svg class="ic me-2"><use href="#plane2"/><use href="#cnr"/></svg></div>
        </section>
        <section class="roll" style="height:151px;margin-bottom:5px"><h2>Channel</h2>
          <div class="d-flex flex-wrap justify-content-end px-1 me-1" style="gap:1px 4px;padding-top:1px"><button class="mbtn" style="width:81px;height:24px">Reset UVWs</button><button class="mbtn" style="width:81px;height:24px">Save...</button><button class="mbtn" style="width:81px;height:24px">Load...</button></div>
          <fieldset class="mx-1 me-2" style="height:69px"><legend>Channel:</legend>
            <div class="d-flex align-items-center ps-2 pt-2"><input class="dot" type="radio" name="ch" id="mc" checked><label for="mc" class="ms-2 flex-grow-1">Map Channel:</label><span class="spin me-2" style="width:46px;height:15px"><input aria-label="Map channel number" value="1"><i></i></span></div>
            <div class="d-flex align-items-center ps-2 pt-2"><input class="dot" type="radio" name="ch" id="vc"><label for="vc" class="ms-2">Vertex Color Channel</label></div>
          </fieldset>
        </section>
        <section class="roll"><h2>Peel</h2><div class="d-flex gap-1 pt-3 ps-4"><svg class="ic"><use href="#peel"/></svg><svg class="ic"><use href="#peel"/></svg><svg class="ic"><use href="#undo"/></svg><svg class="ic"><path d="M2 6h16v12H2zM7 6V3h6v3" fill="#a08a5c" stroke="#d5c08a"/></svg></div></section>
      </div>
      <div class="rail ms-1"></div>
    </div>
  </aside>
</main>

<footer class="status d-flex flex-shrink-0 gap-1 pe-1">
  <div class="listener d-flex flex-column flex-shrink-0 pt-0"><input aria-label="Macro recorder" class="rec w-100"><input aria-label="Script listener" class="w-100" value="Welcome to"></div>
  <div class="d-flex flex-column flex-grow-1 ms-1">
    <div class="d-flex align-items-center gap-2 pe-2"><div class="sline flex-grow-1">1 Object Selected</div>
      <svg width="14" height="18" viewBox="0 0 14 18"><circle cx="7" cy="6" r="4" fill="#e08a94"/><path d="M7 9v7" stroke="#eaa" stroke-width="2"/></svg>
      <svg width="15" height="15"><use href="#lock"/></svg><svg width="13" height="13"><use href="#gizmo"/></svg>
      <label class="d-flex align-items-center">X:<input class="field coord ms-1"></label>
      <label class="d-flex align-items-center">Y:<input class="field coord ms-1"></label>
      <label class="d-flex align-items-center">Z:<input class="field coord ms-1"></label></div>
    <div class="d-flex align-items-center pt-1"><div class="sline flex-grow-1">Select texture vertices</div><button class="on" aria-label="Isolate" style="width:17px;height:17px"><svg width="13" height="13"><path d="M2 4l3-2h7v7l-2 3H2zM4 5h5v5H4z" fill="#5a8fd8" stroke="#fff" stroke-width="1.500"/></svg></button></div>
  </div>
  <div class="d-flex flex-column gap-1 flex-shrink-0" style="width:83px"><div class="sline">Grid = 0,254m</div><div class="sline">Add Time Tag</div></div>
  <button class="mbtn flex-shrink-0" aria-label="Set keys" style="width:36px"><svg width="22" height="10"><circle cx="4" cy="5" r="3" fill="none" stroke="#000" stroke-width="2"/><path d="M7 5h13M16 5v4M19 5v4" stroke="#000" stroke-width="2"/></svg></button>
  <div class="d-flex flex-column flex-shrink-0" style="width:38px"><button class="mbtn" style="height:18px">Auto</button><button class="mbtn" style="height:18px">Set K.</button></div>
  <div class="flex-shrink-0" style="width:96px"><select class="drop w-100 d-block" aria-label="Key filter set"><option>Selected</option></select><div class="d-flex"><svg class="ic"><path d="M3 13q3 0 4-5t4-3 1 7 4-5" fill="none" stroke="#d66"/></svg><button class="mbtn flex-grow-1 mt-1" style="height:16px">Filters...</button></div></div>
  <div class="pb flex-shrink-0 ms-1"><div class="d-flex justify-content-between" style="height:19px"><svg class="ic"><use href="#kstart"/></svg><svg class="ic"><use href="#kprev"/></svg><svg class="ic"><use href="#kplay"/></svg><svg class="ic" viewBox="0 0 20 20"><use href="#kprev" transform="matrix(-1 0 0 1 20 0)"/></svg><svg class="ic" viewBox="0 0 20 20"><use href="#kstart" transform="matrix(-1 0 0 1 20 0)"/></svg><svg class="ic" viewBox="0 0 20 20"><circle cx="7" cy="9" r="5" fill="#e6f0ea"/><path d="M10 12l4 4" stroke="#999" stroke-width="2"/><path d="M13 4h6M16 1v6M13 10h6" stroke="#ddd"/></svg><svg class="ic" viewBox="0 0 20 20"><path d="M3 3h6v6H3zM11 3h6v6h-6zM3 11h6v6H3z" fill="#aaa"/><path d="M11 11l5 5" stroke="#eee" stroke-width="3"/></svg><svg class="ic" viewBox="0 0 20 20"><path d="M6 6h8v8H6z" fill="#6a9f5c"/><path d="M1 5V1h4M15 1h4v4M1 15v4h4M19 15v4h-4" stroke="#ddd" fill="none"/></svg><svg class="ic" viewBox="0 0 20 20"><path d="M6 1h6v6H6zM13 3h6v7h-6z" fill="#ddd"/><path d="M2 10h9v8H2z" fill="#6a9f5c"/></svg></div>
  <div class="d-flex justify-content-between align-items-center" style="height:18px"><svg class="ic" viewBox="0 0 20 20"><path d="M2 5v10M18 5v10M9 5l-5 5 5 5zM11 5l5 5-5 5z" fill="none" stroke="#ccc" stroke-width="1.500"/></svg><span class="spin" style="width:64px;height:16px"><input aria-label="Current frame" value="0"><i></i></span><svg width="14" height="16" viewBox="0 0 20 20"><path d="M2 2h14v14H2z" fill="#dfe6ee"/><path d="M2 2h7v7H2z" fill="#357"/><circle cx="15" cy="15" r="4" fill="#eee" stroke="#333"/></svg><svg width="13" height="13"><use href="#rectsel"/></svg><svg width="15" height="15"><use href="#hand"/></svg><svg width="15" height="15" viewBox="0 0 20 20"><circle cx="10" cy="11" r="6" fill="none" stroke="#9c8" stroke-width="2"/><path d="M10 3v8l6 4" stroke="#ddd" fill="none" stroke-width="2"/></svg><svg width="14" height="14" viewBox="0 0 20 20"><path d="M2 2h15v15H2z" fill="#ddd"/><path d="M6 11V6h5M6 6l8 8" stroke="#222" fill="none" stroke-width="2"/></svg></div></div>
</footer>

<section class="uvwin d-flex flex-column" aria-label="Edit UVWs">
  <div class="uvtitle d-flex align-items-center flex-shrink-0">
    <svg width="17" height="17" viewBox="0 0 17 17"><path d="M0 0h17v17H0z" fill="#36a6ad"/><path d="M5 1l6 2 3 4-4 4-6 1 3-5z" fill="#0b4a55"/><path d="M3 14h11" stroke="#bfe9ea" stroke-width="2"/></svg>
    <span class="flex-grow-1 text-center">Edit UVWs</span>
    <button class="winbtn align-self-start" aria-label="Minimize"><svg width="12" height="12"><path d="M0 11h12" stroke="#222" stroke-width="2"/></svg></button>
    <button class="winbtn align-self-start" aria-label="Maximize"><svg width="13" height="11"><path d="M.5 1.500h12v9H.5z" fill="none" stroke="#222"/><path d="M0 1.500h13" stroke="#222" stroke-width="2"/></svg></button>
    <button class="close" aria-label="Close"><svg width="9" height="9"><path d="M1 1l7 7M8 1L1 8" stroke="#fff" stroke-width="2"/></svg></button>
  </div>
  <nav class="uvmenu d-flex align-items-center flex-shrink-0"><a href="#">File</a><a href="#">Edit</a><a href="#">Select</a><a href="#">Tools</a><a href="#">Mapping</a><a href="#">Options</a><a href="#">Display</a><a href="#">View</a></nav>
  <div class="uvtool d-flex align-items-center flex-shrink-0 px-1">
    <svg class="ic"><use href="#move"/><use href="#cnr"/></svg><svg class="ic"><use href="#rot"/></svg><svg class="ic"><use href="#uvscale"/></svg><button class="on" aria-label="Freeform mode"><svg width="22" height="22"><use href="#uvfree"/></svg></button><span class="lbar ms-1"></span><svg class="ic"><use href="#mirror"/></svg>
    <span class="flex-grow-1"></span>
    <button class="on" aria-label="Show map"><svg class="ic"><use href="#chkcube"/></svg></button><span style="font-size:12px;color:#999;width:18px" class="ms-1">UV</span><svg width="13" height="13" class="ms-1 me-1"><use href="#props"/></svg>
    <select class="drop me-2" aria-label="Background map" style="width:141px"><option>CheckerPattern&nbsp; ( Checker )</option></select>
  </div>
  <div class="d-flex flex-grow-1 overflow-hidden">
    <div class="uvarea flex-grow-1 d-flex align-items-center justify-content-center overflow-hidden">
      <div class="checker">
      <svg width="100%" height="100%" viewBox="21 33 1425 1425" fill="none" stroke-width="3" stroke-linejoin="round">
        <defs><g id="half">
          <path stroke="#fff" stroke-width="2.500" d="M65 50L52 140 106 172 65 50 106 276M128 100L106 172 138 235 128 100 176 190 138 235 72 245 106 172M52 140L72 245 36 225 52 140M36 225L28 315 72 245 106 276 138 235 176 263M176 190V583M28 315L106 276 88 330 44 350 28 315M44 350L80 382 88 330 138 305 106 276M138 235L150 300 176 263M88 330L125 380 80 382 122 412 95 460 80 382 35 360M35 400L80 382 50 460 35 400M50 460H176M50 460L72 525 95 460 122 545 72 525 62 592 122 545 100 605 62 592M52 540L95 460M122 545L128 642 150 560 122 545 140 500 95 460 122 412 140 500 176 490M128 642L100 605M150 560L176 583 128 642M150 560L140 500M176 520L122 545M72 525L100 605M138 235L176 310M106 276L125 310 88 330"/>
          <path stroke="#fff" stroke-width="2" d="M138 235L120 330 118 400 135 460 150 520M150 290L132 320 126 370 138 420 176 470M176 263L145 310 112 330 88 330M158 280L150 340 152 400 160 460M165 280L160 350 164 430 168 500M152 300L170 340 150 380 172 410 148 430 172 450M120 330L150 320 176 340M118 400L150 390 176 380M126 370L150 380M122 412L150 430 176 420M135 460L160 440 176 455M140 340L170 360 140 380 176 400M112 360H128M156 360L176 350M150 470L140 500 160 530M176 500L150 520M160 300V470M170 290V560M145 380V470M135 385L176 440M165 320L145 440M155 320L172 470M130 330L176 300M130 420L176 395M140 450L176 430M112 330L118 400M104 340L125 380 104 400M95 420L140 440M155 380L165 470M149 300V345M142 385L158 460M162 380H176M150 405H176M155 425H176M152 445H176M145 490L170 520M158 465L170 540M118 300L140 320M106 350L80 382M106 350L122 412M88 330L106 350"/>
        </g></defs>
        <use href="#half"/><use href="#half" transform="matrix(-1 0 0 1 352 0)"/>
        <g stroke="#3fc43f"><path d="M28 315L36 225 50 140 65 50 128 100 175 187 230 100 293 50 302 140 316 225 326 315M35 360L28 400 50 460M44 480L52 540 62 592 100 605 128 642 176 583 224 645 250 608 292 592 300 540 305 480M318 360L326 400 302 460"/>
        <ellipse cx="141" cy="355" rx="11" ry="9" fill="#b7d3b2"/><ellipse cx="211" cy="357" rx="11" ry="9" fill="#5d8b5a"/><path d="M155 485q21-12 43 0z" fill="#4fae4f"/>
        <path d="M338 305l12-2 5 15-6 20-10-3-4-14zM338 355l10-2 7 14-8 20-10-6-3-14zM30 548l14 2-6 60 4 50 5 28-12 6-8-18 4-30-2-40z"/></g>
        <path stroke="#fff" d="M340 312l10 6-8 8 10 6M340 362l10 6-8 6 8 8M36 560v20l-4 20 6 25-4 30 6 25"/>
        <path stroke="#2c2cae" d="M28 315L44 350M326 318L311 352M44 458L52 475M308 460L299 476M1190 400l25 32-32 52-13-6M1130 655l-12 15"/>
        <path stroke="#fff" stroke-width="2.500" d="M520 65L488 140M520 65L505 145M538 78L520 145M538 78L550 200 588 38 560 185 610 235 588 38 620 225 630 105 645 220 672 178 610 150M555 76L590 165M538 150L560 185 540 262 582 245 560 185M545 180L582 245 588 285 610 235 582 245M540 220L610 235 645 220 710 240 663 265 645 220 630 190M610 235L612 300 663 265 640 320 612 300 588 285M612 300V380L640 320 630 375M612 330L640 365 612 300M663 265L700 310 640 320 665 355 700 345 663 265M665 360L710 380 675 405M700 345L683 458M588 38L575 270M570 120L600 280M545 100L580 230M600 150L625 370M630 105L610 235 590 130 560 185M665 180L610 235M660 215L600 270M545 150L600 310"/>
        <path stroke="#3fc43f" d="M475 38L555 76 588 38 630 105 672 178 710 240 700 320 733 460 683 458 665 360 612 380 588 285 540 262 536 150 488 140zM733 460L1360 975M733 460L1115 838 1270 985M700 440L733 460"/>
        <path stroke="#f4f0ea" stroke-width="2.500" d="M683 458L1110 838 1300 1012M733 460L1060 778 1200 920"/>
        <path stroke="#3fc43f" d="M1190 400L1152 382 1133 178 1130 76 1275 112 1368 205 1410 330 1414 465 1395 600 1350 720 1310 818 1300 895 1360 975M1300 1012L1160 1038 1100 963 1105 850 1147 728 1118 675 1185 570 1183 485"/>
        <path stroke="#fff" d="M1133 178L1272 113 1229 200 1133 178 1205 276 1229 200 1366 206 1293 268 1229 200M1293 268L1205 276 1252 327 1293 268 1408 330 1333 372 1293 268M1205 276L1152 382M1252 327L1190 400M1252 327L1333 372 1285 408 1252 327M1215 432L1285 408 1342 484 1333 372 1412 465 1342 484 1282 505 1285 408M1215 432L1282 505 1264 606 1342 484 1325 600 1412 465M1325 600H1395M1325 600L1264 606 1200 612 1282 505M1215 432L1225 510 1200 612 1215 432 1190 605M1183 485L1210 490 1185 520M1190 560L1215 500M1200 612L1128 692 1190 605M1128 692L1130 655 1200 612 1212 730 1264 606 1272 720 1325 600 1350 720 1272 720 1212 730H1147L1200 612M1212 728L1112 838 1190 843 1212 728M1272 722L1190 843 1245 822 1272 722 1310 818 1245 822 1240 877 1190 843 1187 900 1110 838M1245 822L1303 855 1240 877M1310 818L1303 855 1237 928 1240 877 1187 900 1190 940 1237 928 1300 895 1303 855M1187 900L1103 915M1187 900L1100 962 1190 940 1160 1037M1190 940L1243 1017 1237 928 1300 1012V895M1237 928L1300 895M1300 1012L1360 975"/>
        <path d="M205 1085L1388 1202 1360 1254 218 1120z" fill="url(#redgrid)" opacity=".6"/>
        <path stroke="#dc1414" stroke-width="4" d="M205 1085L1388 1202 1360 1254 218 1120zM230 1087L800 1170 1355 1253M225 1232L1308 1419 228 1246zM225 1238L1300 1418"/>
        <g stroke="#f0693c"><path d="M203 1084H1390V1421H203zM796 1205V1300M745 1252H845"/><path d="M196 1077h15v15h-15zM788 1077h15v15h-15zM1382 1077h15v15h-15zM196 1244h15v15h-15zM1382 1244h15v15h-15zM196 1414h15v15h-15zM788 1414h15v15h-15zM1382 1414h15v15h-15zM790 1246h12v12h-12z"/></g>
      </svg></div>
    </div>
    <div class="side flex-shrink-0">
      <section class="roll" style="height:84px"><h2>Quick Transform</h2>
        <div class="d-flex align-items-center ps-1 pt-1"><button aria-label="Pivot" style="margin-right:11px"><svg class="ic"><use href="#redplus"/><use href="#cnr"/></svg></button>
        <div class="d-grid" style="grid-template-columns:repeat(3,23px);row-gap:12px"><svg class="ic"><use href="#alh"/></svg><svg class="ic"><use href="#diag"/></svg><svg class="ic"><use href="#rcw"/></svg><svg class="ic"><use href="#alv"/></svg><svg class="ic"><use href="#distort"/></svg><svg class="ic"><use href="#rccw"/></svg></div>
        <svg width="24" height="58" class="ms-1"><path d="M6 0v58" stroke="#777"/><path d="M13 12h8M13 12l3-2M13 12l3 2" stroke="#ddd"/><path d="M12 17h10M20 34v22" stroke="#ddd" stroke-dasharray="2 2"/></svg></div></section>
      <section class="roll" style="height:53px"><h2>Reshape Elements</h2><div class="d-flex gap-1 pt-2" style="padding-left:36px"><svg class="ic"><use href="#straight"/></svg><svg class="ic"><use href="#relax"/><use href="#bolt"/></svg><svg class="ic"><use href="#relax"/><use href="#cnr"/></svg></div></section>
      <section class="roll" style="height:53px"><h2>Stitch</h2><div class="d-flex gap-1 pt-2" style="padding-left:20px"><svg class="ic"><use href="#st"/></svg><svg class="ic"><use href="#st2"/></svg><svg class="ic"><use href="#st3"/></svg><svg class="ic"><use href="#stb"/><use href="#cnr"/></svg></div></section>
      <section class="roll" style="height:102px"><h2>Explode</h2><div class="d-flex gap-1 pt-2 ps-2"><svg class="ic"><use href="#break"/></svg><svg class="ic"><use href="#flat"/><path d="M10 18l9-9v9z" fill="#eef" stroke="#36c"/></svg><svg class="ic"><use href="#flat"/><path d="M10 10h9v9h-9zM13 10v9M16 10v9M10 13h9" fill="#fff" stroke="#264"/></svg><svg class="ic"><use href="#flat"/><circle cx="13" cy="13" r="6" fill="url(#gball)"/></svg><svg class="ic"><use href="#flat"/><use href="#cnr"/></svg></div>
        <fieldset style="height:49px;margin:6px 0 0 6px"><legend>Weld</legend><div class="d-flex gap-1 ps-1 align-items-end"><svg class="ic ms-1"><use href="#target"/></svg><svg class="ic"><use href="#weld"/><use href="#cnr"/></svg><div class="ms-3 ps-1"><label for="thr" class="d-block mb-1">Threshold:</label><span class="spin d-flex" style="width:35px"><input id="thr" value="0,01"><i></i></span></div></div></fieldset></section>
      <section class="roll" style="height:133px"><h2>Peel</h2>
        <div style="border:1px solid #222;height:61px;margin:7px 0 0 10px;padding:7px 0 0 26px"><label class="d-flex align-items-center"><input class="tick me-2" type="checkbox" checked><span class="ps-1">Detach</span></label><div class="d-flex gap-1 pt-2" style="margin-left:-4px"><svg class="ic"><use href="#peel"/><use href="#bolt"/></svg><svg class="ic"><use href="#peel"/></svg><svg class="ic"><use href="#undo"/></svg></div></div>
        <fieldset style="height:49px;margin:0 0 0 10px"><legend>Pins:</legend><div class="d-flex gap-1 ps-2 pt-2 align-items-center"><svg class="ic"><use href="#pin"/></svg><svg class="ic"><use href="#pin"/><path d="M13 12l6 7M19 12l-6 7" stroke="#999" stroke-width="1.500"/></svg><button class="on" aria-label="Auto pin"><svg class="ic"><use href="#pin"/><path d="M10 9l4-5 3 3-4 5z" fill="#3c5"/><use href="#bolt"/></svg></button><span class="lbar align-self-start"></span><svg class="ic ms-1"><use href="#pin"/><use href="#arrow"/></svg></div></fieldset></section>
      <section class="roll" style="height:107px"><h2>Arrange Elements</h2>
        <div class="d-flex"><div class="pt-4 d-flex flex-column" style="gap:13px;width:40px;padding-left:6px"><svg class="ic"><use href="#pack"/></svg><svg class="ic"><use href="#lin"/></svg></div>
        <div class="d-flex flex-grow-1" style="border:1px solid #222;height:88px;margin-top:4px"><div class="d-flex flex-column ps-1" style="gap:13px;padding-top:18px"><svg class="ic"><use href="#packs"/></svg><svg class="ic"><use href="#packc"/></svg></div>
        <div style="padding:9px 0 0 15px"><label class="d-flex align-items-center mb-2"><input class="tick me-2" type="checkbox" checked>Rescale</label><label class="d-flex align-items-center mb-2"><input class="tick me-2" type="checkbox">Rotate</label><label for="padn" class="d-block mb-1">Padding:</label><span class="spin d-flex" style="width:42px"><input id="padn" value="0,02"><i></i></span></div></div></div></section>
    </div>
  </div>
  <div class="foot d-flex align-items-center ps-1 flex-shrink-0">
    <svg class="ic"><use href="#verts"/></svg><svg class="ic"><use href="#tri"/></svg><button class="on" aria-label="Polygon mode"><svg class="ic"><use href="#poly"/></svg></button><span class="lbar"></span><svg class="ic ms-1"><use href="#cube"/></svg><span class="lbar ms-1"></span><svg class="ic"><use href="#grow"/></svg><svg class="ic"><use href="#shrink"/></svg><svg class="ic"><use href="#loop1"/></svg><svg class="ic ms-1"><use href="#loop1" opacity=".3"/><use href="#plusw"/></svg><svg class="ic"><use href="#loop1" opacity=".3"/><use href="#minw"/></svg><svg class="ic"><use href="#loop3"/></svg><svg class="ic"><use href="#loop3" opacity=".3"/><use href="#plusw"/></svg><svg class="ic"><use href="#loop3" opacity=".3"/><use href="#minw"/></svg><svg class="ic"><use href="#brush"/></svg><svg class="ic"><use href="#gbrush"/></svg><svg class="ic ms-1"><use href="#gbrush2"/></svg>
    <span class="flex-grow-1"></span>
    <svg class="ic"><circle cx="10" cy="10" r="9" fill="url(#gsun)"/></svg><span class="spin mb-1" style="width:41px"><input aria-label="Soft selection" value="0,0"><i></i></span><svg class="ic ms-2"><path d="M2 18L17 2" stroke="#6d93d8" stroke-width="1.500"/><use href="#cnr"/></svg><span style="font-size:12px;width:20px">XY</span><span class="lbar ms-1"></span><button class="on" aria-label="Limit by edges"><svg class="ic"><circle cx="10" cy="10" r="8" fill="#d6b45c"/><path d="M3 10h14M6 8v4M10 8v4M14 8v4" stroke="#543"/><use href="#chk"/></svg></button><span class="spin mb-1 me-2" style="width:28px"><input aria-label="Edge limit" value="16"><i></i></span>
  </div>
  <div class="foot d-flex align-items-center ps-1 flex-shrink-0">
    <svg width="17" height="17"><use href="#gizmo"/></svg><span class="lbar ms-1 mb-1"></span><label class="ms-2 mb-1 d-flex align-items-center">U:<span class="spin ms-1" style="width:34px"><input><i></i></span></label><label class="ms-1 mb-1 d-flex align-items-center">V:<span class="spin ms-2" style="width:34px"><input><i></i></span></label><label class="ms-1 mb-1 d-flex align-items-center">W:<span class="spin ms-1" style="width:35px"><input value="0,0"><i></i></span></label><span class="lbar ms-1 mb-1"></span>
    <span class="flex-grow-1"></span>
    <svg class="ic"><use href="#lock"/></svg><svg class="ic"><use href="#hide"/></svg><span class="lbar mb-1"></span><svg class="ic"><use href="#bulb"/><use href="#cnr"/></svg><svg class="ic ms-1"><use href="#snow"/><use href="#cnr"/></svg><span class="lbar ms-1 mb-1"></span>
    <select class="drop mb-1" aria-label="Material IDs" style="width:115px"><option>All IDs</option></select><svg class="ic"><use href="#hand"/></svg><svg class="ic"><use href="#lens"/><path d="M15 3h5M17.500 1v5M15 8h5" stroke="#ccc"/></svg><svg class="ic"><use href="#lensr"/></svg><svg class="ic"><use href="#box"/></svg><svg class="ic ms-1"><use href="#snapg"/></svg><span></span>
  </div>
</section>
<div class="tip" role="tooltip">Move Selected Subobject</div>
<svg class="ink" width="720" height="280" fill="none" stroke="#4648a8" stroke-width="2.500" stroke-linecap="round" stroke-linejoin="round"><path transform="scale(1 .981)" d="M197 183L198 130 190 117 175 100 150 89 125 85H82L50 92 20 100 8 116 0 130M0 198L10 215 32 243 45 251H82L110 245 145 229 165 215 195 201 206 190M205 181H275L305 175 335 165 370 158 418 156M205 181H275L340 187 375 191 430 197 533 199H610L660 203 690 208H708M205 182L250 196 310 216 340 234 375 256 393 266"/></svg>
</div>
<script src="https://cdn.jsdelivr.net/npm/bootstrap@5.3.0/dist/js/bootstrap.bundle.min.js"></script>
</body>
</html>
